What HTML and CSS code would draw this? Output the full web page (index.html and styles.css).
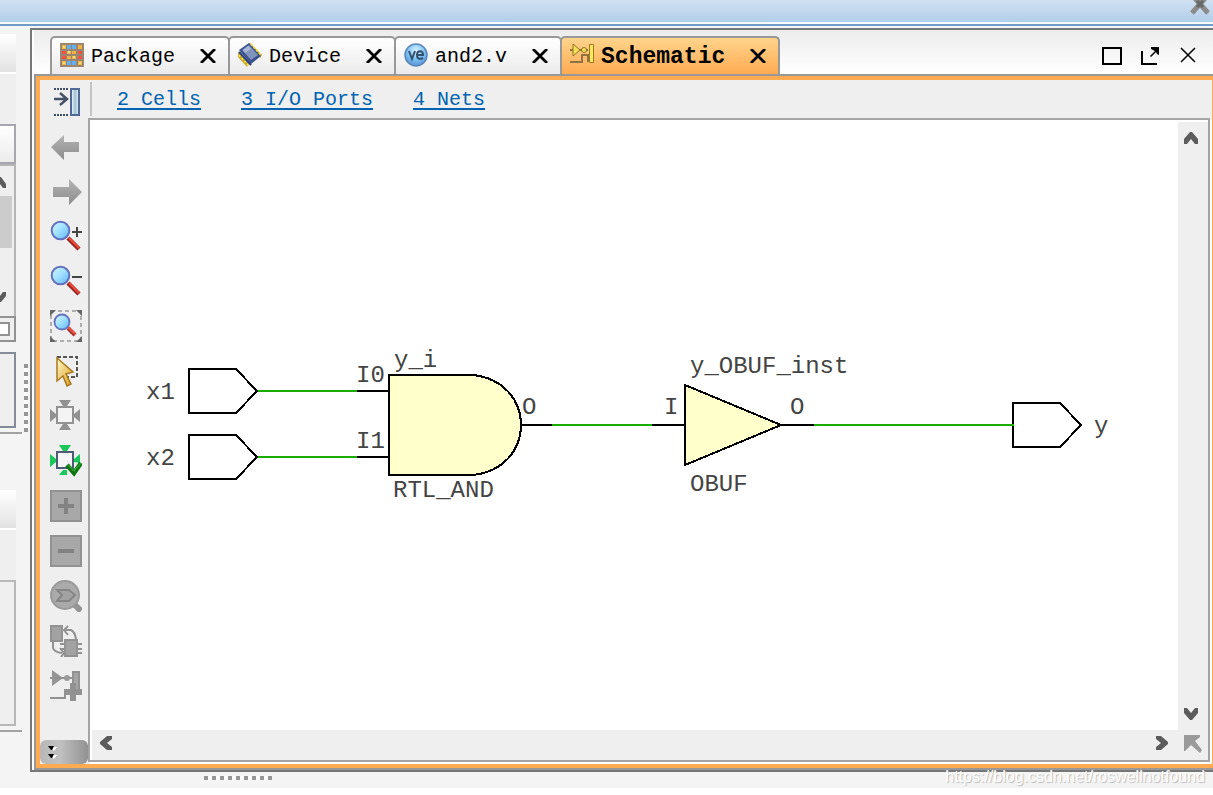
FILE: index.html
```
<!DOCTYPE html>
<html lang="en">
<head>
<meta charset="utf-8">
<title>Schematic</title>
<link rel="stylesheet" href="styles.css">
</head>
<body>
<svg class="defs" aria-hidden="true">
  <defs>
    <linearGradient id="lens" x1="0" y1="0" x2="1" y2="1"><stop offset="0" stop-color="#d8f6ff"/><stop offset=".45" stop-color="#a3e2ff"/><stop offset="1" stop-color="#5db6f5"/></linearGradient>
    <linearGradient id="gold" x1="0" y1="0" x2="1" y2="1"><stop offset="0" stop-color="#fffbd0"/><stop offset="1" stop-color="#d99a10"/></linearGradient>
    <linearGradient id="grey" x1="0" y1="0" x2="0" y2="1"><stop offset="0" stop-color="#b4b4b4"/><stop offset="1" stop-color="#8c8c8c"/></linearGradient>
    <linearGradient id="glass"><stop offset="0" stop-color="#fff"/><stop offset=".5" stop-color="#9dc3d6"/><stop offset="1" stop-color="#e8f4fa"/></linearGradient>
    <radialGradient id="ball" cx=".5" cy=".3" r=".7"><stop offset="0" stop-color="#d9f2ff"/><stop offset=".6" stop-color="#74bff5"/><stop offset="1" stop-color="#5c8fd0"/></radialGradient>
    <symbol id="cross" viewBox="0 0 16 14"><path d="M1 0l14 14M15 0L1 14" stroke="#000" stroke-width="2.800" fill="none"/></symbol>
    <symbol id="chevron" viewBox="0 0 14 12"><path d="M0 7l6-7h2l6 7v5h-3L7 7l-4 5H0z" fill="#5c5c5c"/></symbol>
  </defs>
</svg>

<header class="titlebar">
  <button class="title-close" aria-label="Close"><svg viewBox="0 0 20 16" width="20" height="16"><path d="M2-5l16 18M18-5L2 13" stroke="#8a8a8a" stroke-width="5"/><path d="M7 1l6 6M13 1L7 7" stroke="#666" stroke-width="3"/></svg></button>
</header>

<div class="workspace">
  <aside class="side">
    <div class="side-stack">
      <div class="side-head"></div>
      <div class="side-bar"></div>
      <div class="side-field"></div>
      <div class="side-scroll">
        <svg class="side-up" viewBox="0 0 6 12" width="6" height="12"><path d="M0 0h1l5 7v4H3L0 7z" fill="#5c5c5c"/></svg>
        <div class="side-thumb"></div>
        <svg class="side-down" viewBox="0 0 6 12" width="6" height="12"><path d="M0 11h1l5-6V1H3L0 5z" fill="#5c5c5c"/></svg>
      </div>
      <div class="side-button"><div class="side-button-inner"></div></div>
      <div class="side-box"></div>
      <div class="side-rule"></div>
      <div class="side-head side-head-lower"></div>
      <div class="side-bar"></div>
      <div class="side-list"></div>
      <div class="side-rule"></div>
    </div>
    <div class="side-grip"></div>
  </aside>

  <main class="panel">
    <div class="tabrow">
      <div class="tabs">
        <div class="tab">
          <svg viewBox="0 0 24 24" width="24" height="24"><path fill="#9c8672" d="M0 0h24v24H0z"/><path fill="#edb445" d="M2 2h4v4H2zM18 2h4v4h-4zM7 8h4v3H7zM12 8h4v3h-4zM7 13h4v3H7zM12 13h4v3h-4zM2 18h4v4H2zM18 18h4v4h-4z"/><path fill="#62b2f3" d="M7 2h4v4H7zM12 2h4v4h-4zM7 18h4v4H7zM12 18h4v4h-4z"/><path fill="#ee5548" d="M2 8h4v3H2zM18 8h4v3h-4zM2 13h4v3H2zM18 13h4v3h-4z"/><path d="M3 3h2v2H3zM8 8h2v2H8zM13 13h2v2h-2zM3 19h2v2H3zM19 19h2v2h-2z" fill="#ffdf8a"/></svg>
          <button class="tab-label">Package</button>
          <button class="tab-close" aria-label="Close Package"><svg width="16" height="14"><use href="#cross"/></svg></button>
        </div>
        <div class="tab">
          <svg viewBox="0 0 24 24" width="24" height="24"><path fill="#c7a82a" d="M0 9l11 12-2 3-9-10zM12 0l12 12-2 3L9 2z"/><path fill="#39518c" d="M1 7l10-7 12 13-10 8z"/><path fill="#7f93bd" d="M4 7l7-5 9 10-7 5z"/><path fill="#a9b8d8" d="M5 7l5-4 3 3-6 4z"/><path stroke="#f7e24a" stroke-width="2" stroke-dasharray="2 2" d="M1 12l10 11M13 1l10 11"/><path stroke="#2d427c" stroke-width="2" d="M1 9l12 13"/></svg>
          <button class="tab-label">Device</button>
          <button class="tab-close" aria-label="Close Device"><svg width="16" height="14"><use href="#cross"/></svg></button>
        </div>
        <div class="tab">
          <svg viewBox="0 0 24 24" width="24" height="24"><circle cx="12" cy="12" r="11" fill="url(#ball)" stroke="#5d87b8" stroke-width="1.5"/><path d="M5 8l3 8 3-8M13 12h6c0-5-6-5-6 0s4 4 6 3" fill="none" stroke="#35506e" stroke-width="2"/></svg>
          <button class="tab-label">and2.v</button>
          <button class="tab-close" aria-label="Close and2.v"><svg width="16" height="14"><use href="#cross"/></svg></button>
        </div>
        <div class="tab tab-active">
          <svg viewBox="0 0 24 24" width="24" height="24"><path d="M0 7h3M10 7h8M0 19h12v-7h6v7" fill="none" stroke="#927245" stroke-width="2"/><path d="M3 1l7 6-7 6z" fill="#f5df59" stroke="#8c7423"/><circle cx="14" cy="7" r="2.500" fill="#f5df59" stroke="#8c7423"/><path fill="#f7e85d" stroke="#9a7a20" d="M19.500 1.500h4v18h-4z"/></svg>
          <button class="tab-label">Schematic</button>
          <button class="tab-close" aria-label="Close Schematic"><svg width="16" height="14"><use href="#cross"/></svg></button>
        </div>
      </div>
      <div class="window-tools">
        <button aria-label="Maximize"><svg viewBox="0 0 20 20" width="20" height="20"><path d="M1 2h18v16H1z" fill="none" stroke="#000" stroke-width="2"/></svg></button>
        <button aria-label="Float"><svg viewBox="0 0 20 20" width="20" height="20"><path d="M2 5v13h15" fill="none" stroke="#000" stroke-width="2"/><path d="M11 1h8v8l-2-1-1-2-5 5-1-1 5-5-4-2z"/></svg></button>
        <button aria-label="Close panel"><svg viewBox="0 0 20 20" width="20" height="20"><path d="M3 2l14 14M17 2L3 16" stroke="#000" stroke-width="1.500"/></svg></button>
      </div>
    </div>

    <div class="panel-body">
      <nav class="toolbar" aria-label="Schematic tools">
        <div class="tools">
        <button aria-label="Show side pane"><svg viewBox="0 0 32 32"><path d="M4 4h15M4 30h15" stroke="#3f4d65" stroke-width="2" stroke-dasharray="2 1"/><path d="M4 14h13M10 8l7 6-7 6" fill="none" stroke="#465268" stroke-width="2.500"/><path d="M21 4h8v26h-8z" fill="url(#glass)" stroke="#526896" stroke-width="2"/></svg></button>
        <button aria-label="Back"><svg viewBox="0 0 32 32"><path d="M1 17L14 5v7h15v10H14v8z" fill="url(#grey)"/></svg></button>
        <button aria-label="Forward"><svg viewBox="0 0 32 32"><path d="M32 17L19 4v8H3v10h16v8z" fill="url(#grey)"/></svg></button>
        <button aria-label="Zoom in"><svg viewBox="0 0 32 32"><path d="M18 18l11 11" stroke="#972525" stroke-width="4.500"/><path d="M19 18l10 10" stroke="#f14b35" stroke-width="2"/><circle cx="10.500" cy="10.500" r="8.800" fill="url(#lens)" stroke="#6472bd" stroke-width="2"/><path d="M22 12h10M27 7v10" stroke="#444" stroke-width="2"/></svg></button>
        <button aria-label="Zoom out"><svg viewBox="0 0 32 32"><path d="M18 18l11 11" stroke="#972525" stroke-width="4.500"/><path d="M19 18l10 10" stroke="#f14b35" stroke-width="2"/><circle cx="10.500" cy="10.500" r="8.800" fill="url(#lens)" stroke="#6472bd" stroke-width="2"/><path d="M22 12h10" stroke="#444" stroke-width="2"/></svg></button>
        <button aria-label="Zoom fit"><svg viewBox="0 0 32 32"><path d="M1 1h30v30H1z" fill="none" stroke="#999" stroke-width="1.500" stroke-dasharray="4 3"/><path d="M0 0h6L0 6zM32 0v6l-6-6zM0 32v-6l6 6zM32 32h-6l6-6z" fill="#666"/><path d="M18 18l7 7" stroke="#a52b2b" stroke-width="4"/><path d="M18 17l7 7" stroke="#f15540" stroke-width="2"/><circle cx="12" cy="12" r="7.500" fill="url(#lens)" stroke="#6472bd" stroke-width="1.800"/></svg></button>
        <button aria-label="Select area"><svg viewBox="0 0 32 32"><path d="M7 2h20v20H14" fill="none" stroke="#555" stroke-width="2" stroke-dasharray="4 2"/><path d="M7 3l16 14-7 2 5 10-4 2-4-10-6 5z" fill="url(#gold)" stroke="#a87a20" stroke-width="1.500"/></svg></button>
        <button aria-label="Fit selection"><svg viewBox="0 0 32 32"><path d="M7 7h16v16H7z" fill="#f4f4f4" stroke="#929292" stroke-width="2"/><path d="M9 0h12l-4 6h-4zM9 30h12l-4-6h-4zM0 9v13l6-5v-3zM30 9v13l-6-5v-3z" fill="#929292"/></svg></button>
        <button aria-label="Auto fit selection"><svg viewBox="0 0 32 32"><path d="M7 7h16v16H7z" fill="#f5f5f7" stroke="#4e5b73" stroke-width="2"/><path d="M9 0h12l-4 6h-4zM9 30h8v-5h-4zM0 9v13l6-5v-3zM30 9v9l-6-1v-3z" fill="#18c95a"/><path d="M17 20l7 8 7-10" fill="none" stroke="#0b7513" stroke-width="4.500"/><path d="M18 20l6 6 7-8" fill="none" stroke="#2d9d2d" stroke-width="1.500"/></svg></button>
        <button aria-label="Expand"><svg viewBox="0 0 32 32"><path d="M1 1h30v30H1z" fill="#a8a8a8" stroke="#929292" stroke-width="2"/><path d="M8 16h16M16 8v16" stroke="#828282" stroke-width="4"/></svg></button>
        <button aria-label="Collapse"><svg viewBox="0 0 32 32"><path d="M1 1h30v30H1z" fill="#a8a8a8" stroke="#929292" stroke-width="2"/><path d="M8 16h16" stroke="#828282" stroke-width="4"/></svg></button>
        <button aria-label="Trace"><svg viewBox="0 0 32 32"><path d="M23 23l8 8" stroke="#939393" stroke-width="6"/><circle cx="15" cy="15" r="14" fill="#aaa" stroke="#999" stroke-width="2"/><path d="M7 10h12l6 5-6 6H7l5-6z" fill="#a2a2a2" stroke="#858585" stroke-width="2"/></svg></button>
        <button aria-label="Swap cells"><svg viewBox="0 0 32 32"><path d="M1 1h11v15H1zM15 15h12v16H15z" fill="#a2a2a2" stroke="#929292" stroke-width="2"/><path d="M3 17v6q1 4 9 5M15 5h6q4 2 5 9M18 1l-4 4 4 5M10 23l4 5-3 4M10 19h4M10 24h4M28 19h4M28 24h4M28 28h4" fill="none" stroke="#929292" stroke-width="2"/></svg></button>
        <button aria-label="Add to schematic"><svg viewBox="0 0 32 32"><path d="M2 0l11 8-11 8z" fill="#959595"/><path d="M0 8h22M0 28h15v-8" fill="none" stroke="#929292" stroke-width="2"/><circle cx="17" cy="8" r="3" fill="#999"/><path d="M23 2h6v19h-6z" fill="#a5a5a5" stroke="#929292" stroke-width="2"/><path d="M23 13v18M14 22h18" stroke="#929292" stroke-width="6"/></svg></button>
        </div>
        <button class="more" aria-label="More tools"><svg viewBox="0 0 10 16" width="10" height="16"><path d="M3 3h7L7 7zM3 11h7l-3 4z" fill="#fff"/><path d="M1 2h6L5 6H4zM1 10h6l-2 4H4z"/></svg></button>
      </nav>

      <section class="view">
        <div class="summary">
          <a href="#cells">2 Cells</a>
          <a href="#ports">3 I/O Ports</a>
          <a href="#nets">4 Nets</a>
        </div>
        <div class="scrollframe">
          <div class="canvas">
            <svg class="schematic" viewBox="90 120 1088 610" width="1088" height="610">
              <g class="wire"><path d="M257 391h100M257 457h100M552 425h100M814 425h199"/></g>
              <g class="shape">
                <path d="M189 369h47l21 22-21 22h-47zM189 435h47l21 22-21 22h-47zM1013 403h47l21 22-21 22h-47z"/>
                <path d="M357 391h32M357 457h32M521 425h31M652 425h33M781 425h33"/>
                <path class="cell" d="M389 375h84c29 3 48 24 48 50s-19 47-48 50h-84z"/>
                <path class="cell" d="M685 385l96 40-96 40z"/>
              </g>
              <path class="wire" d="M1004 425h10"/>
              <g class="label">
                <text x="146" y="399">x1</text>
                <text x="146" y="465">x2</text>
                <text x="356" y="382">I0</text>
                <text x="356" y="448">I1</text>
                <text x="394" y="367">y_i</text>
                <text x="393" y="497">RTL_AND</text>
                <text x="522" y="414">O</text>
                <text x="664" y="414">I</text>
                <text x="690" y="373">y_OBUF_inst</text>
                <text x="690" y="491">OBUF</text>
                <text x="790" y="414">O</text>
                <text x="1094" y="433">y</text>
              </g>
            </svg>
          </div>
          <div class="vscroll">
            <button aria-label="Scroll up"><svg width="14" height="12"><use href="#chevron"/></svg></button>
            <button aria-label="Scroll down"><svg class="turn-down" width="14" height="12"><use href="#chevron"/></svg></button>
          </div>
          <div class="hscroll">
            <button aria-label="Scroll left"><svg class="turn-left" width="14" height="12"><use href="#chevron"/></svg></button>
            <button aria-label="Scroll right"><svg class="turn-right" width="14" height="12"><use href="#chevron"/></svg></button>
          </div>
          <button class="corner" aria-label="World view"><svg viewBox="0 0 18 18" width="18" height="18"><path d="M0 0h16v2l-5 4 7 9-2 3-9-8-6 6H0z" fill="#9a9a9a"/></svg></button>
        </div>
      </section>
    </div>
  </main>
</div>

<footer class="footer">
  <div class="footer-grip"></div>
  <span class="credit">https://blog.csdn.net/roswellnotfound</span>
</footer>
</body>
</html>
```

FILE: styles.css
```
* { box-sizing: border-box; }

body {
  margin: 0;
  height: 100vh;
  display: flex;
  flex-direction: column;
  overflow: hidden;
  background: #f4f4f4;
  font-family: "Liberation Mono", monospace;
  font-size: 20px;
  color: #000;
}

button {
  display: block;
  margin: 0;
  padding: 0;
  border: 0;
  background: none;
  font: inherit;
  color: inherit;
}

svg { display: block; flex: none; }
.defs { position: absolute; width: 0; height: 0; }

.titlebar {
  flex: none;
  display: flex;
  justify-content: flex-end;
  align-items: flex-start;
  height: 28px;
  padding-right: 3px;
  background: linear-gradient(#d0e1f2, #b2cee9 22px, #f8fbff 22px, #f8fbff 24px, #739bca 24px, #739bca 26px, #f5f8fb 26px);
}

.workspace { flex: 1; display: flex; min-height: 0; }

/* Neighbouring pane, cut off at the window edge */
.side { flex: none; display: flex; width: 30px; }
.side-stack { flex: none; display: flex; flex-direction: column; width: 22px; }
.side-stack > * { flex: none; width: 16px; }
.side-head { height: 40px; margin-top: 6px; border-bottom: 2px solid #fff; background: linear-gradient(#fff, #e2e2e2); }
.side-head-lower { margin-top: 56px; }
.side-bar { height: 50px; background: #efefef; }
.side-field { height: 40px; border: 2px solid #a8a8ac; border-left: 0; background: linear-gradient(#fff, #ececec); }
.side-scroll { display: flex; flex-direction: column; height: 152px; padding-top: 11px; border: 2px solid #b5b5b5; border-width: 2px 2px 0 0; background: #efefef; }
.side-thumb { width: 12px; height: 52px; margin-top: 7px; background: #ccc; }
.side-down { margin-top: 43px; }
.side-button { height: 26px; padding: 4px 2px 4px 0; border: 2px solid #929292; border-left: 0; background: #efefef; }
.side-button-inner { height: 14px; width: 10px; border: 2px solid #929292; border-left: 0; background: #fff; }
.side-box { height: 76px; margin-top: 10px; border: 2px solid #858a98; border-left: 0; background: #efefef; }
.side-stack > .side-rule { width: 22px; height: 2px; margin-top: 4px; background: #a2a2a2; }
.side-list { height: 146px; border: 2px solid #b8b8b8; border-left: 0; background: #efefef; }
.side-grip { width: 4px; height: 68px; margin: 336px 0 0 2px; background: repeating-linear-gradient(#969696 0 4px, #fff 4px 8px); }

/* Editor panel */
.panel {
  flex: 1;
  min-width: 0;
  display: flex;
  flex-direction: column;
  border: 2px solid #777;
  border-right: 0;
  padding-left: 2px;
  background: #fff;
}

.tabrow { flex: none; display: flex; justify-content: space-between; height: 46px; padding: 6px 15px 0 16px; background: linear-gradient(#ececec, #fff 44px, #989898 44px); }
.tabs { display: flex; }
.tab {
  display: flex;
  align-items: center;
  height: 40px;
  padding: 0 12px 2px 8px;
  border: 2px solid #989898;
  border-radius: 5px 5px 0 0;
  background: linear-gradient(#fff, #ebebeb);
}
.tab + .tab { margin-left: -2px; }
.tab-label { margin-left: 7px; padding-top: 3px; }
.tab-close { margin-left: 25px; padding-top: 2px; }
.tab-active { border-bottom-color: #ffab52; background: linear-gradient(#ffd48c, #ffab52); }
.tab-active .tab-label { font-size: 23px; font-weight: bold; }

.window-tools { display: flex; align-items: center; gap: 18px; }

.panel-body {
  flex: 1;
  min-height: 0;
  display: flex;
  border: 4px solid #ffab52;
  border-right-width: 1px;
  outline: 2px solid #989898;
  margin: 0 0 2px 2px;
  background: #efefef;
}

.toolbar { flex: none; display: flex; flex-direction: column; justify-content: space-between; width: 48px; }
.tools { display: flex; flex-direction: column; align-items: center; gap: 13px; padding: 5px 0 0 4px; }
.tools svg { width: 32px; height: 32px; }
.more { height: 24px; padding-left: 7px; border-radius: 6px; background: linear-gradient(90deg, #b8b8b8, #c0c0c0 20px, #929292); }

.view { flex: 1; min-width: 0; display: flex; flex-direction: column; }
.summary {
  flex: none;
  display: flex;
  align-items: center;
  gap: 40px;
  height: 34px;
  margin: 2px 0 2px 2px;
  padding-left: 25px;
  border-left: 2px solid #c4c4c4;
}
.summary a { color: #0063b1; text-decoration-thickness: 2px; text-underline-offset: 3px; }

.scrollframe {
  flex: 1;
  min-height: 0;
  display: grid;
  grid-template: minmax(0, 1fr) 30px / minmax(0, 1fr) 30px;
  margin-right: 2px;
  border: 2px solid #a4a4a4;
  box-shadow: 2px 2px 0 #fff;
  margin-bottom: 2px;
  background: #efefef;
}
.canvas { background: #fff; overflow: hidden; }
.vscroll { display: flex; flex-direction: column; justify-content: space-between; align-items: center; padding: 10px 4px 10px 0; border-top: 2px solid #fff; }
.hscroll { display: flex; justify-content: space-between; align-items: center; padding: 0 9px 4px 7px; border-left: 2px solid #fff; }
.corner { padding: 0 0 2px 6px; }
.turn-down { transform: rotate(180deg); }
.turn-left { transform: rotate(-90deg); }
.turn-right { transform: rotate(90deg); }

.shape path { fill: #fff; stroke: #000; stroke-width: 2; shape-rendering: crispEdges; }
.shape .cell { fill: #ffffcb; }
.wire { stroke: #1bac00; stroke-width: 2; shape-rendering: crispEdges; }
.label { font-size: 24px; fill: #444; }

.footer {
  flex: none;
  display: flex;
  justify-content: space-between;
  height: 23px;
  padding: 0 8px 0 204px;
  background: linear-gradient(#f4f4f4 16px, #fff 16px);
}
.footer-grip { width: 68px; height: 4px; margin-top: 4px; background: repeating-linear-gradient(90deg, #969696 0 4px, #fff 4px 8px); }
.credit { font-family: "Liberation Sans", Arial, sans-serif; font-size: 16px; line-height: 9px; color: #fff; text-shadow: 1px 1px 1px #bbb; }
```
